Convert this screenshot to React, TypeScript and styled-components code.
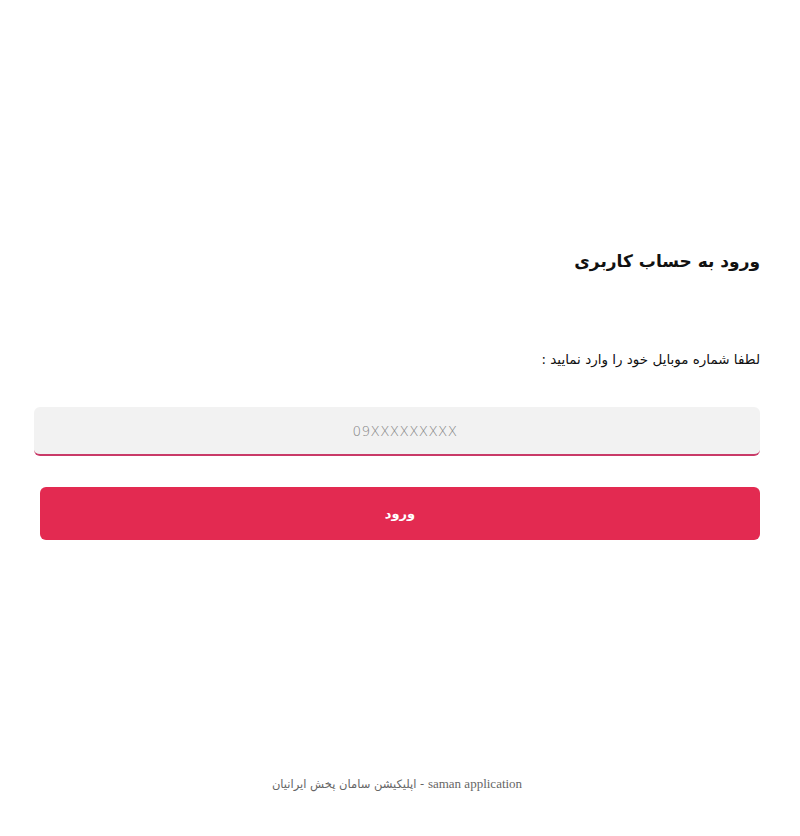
import React from 'react';
import styled, { createGlobalStyle } from 'styled-components';

const GlobalStyle = createGlobalStyle`
  html, body {
    margin: 0;
    padding: 0;
    background: #ffffff;
  }
  body {
    font-family: "DejaVu Sans", "Noto Sans", sans-serif;
    direction: rtl;
  }
`;

const StyledPage = styled.div`
  /* Display */
  min-height: 836px;
  display: flex;
  flex-direction: column;
  box-sizing: border-box;
  padding: 0 40px 0 34px;
`;

const StyledMain = styled.main`
  /* Display */
  flex: 1;
  display: flex;
  flex-direction: column;
  padding-top: 246px;
`;

const StyledTitle = styled.h1`
  /* Text */
  margin: 0;
  font-size: 17px;
  font-weight: 700;
  color: #111111;
  line-height: 30px;
`;

const StyledLabel = styled.p`
  /* Text */
  margin: 71px 0 0;
  font-size: 13.5px;
  color: #111111;
  line-height: 24px;
`;

const StyledInput = styled.input`
  /* Display */
  margin-top: 36px;
  height: 49px;
  width: 100%;
  box-sizing: border-box;
  padding: 0 0 0 16px;
  border: none;
  border-bottom: 2px solid #c93a68;
  border-radius: 6px;
  background: #f2f2f2;
  outline: none;

  /* Text */
  font-family: "DejaVu Sans", sans-serif;
  font-size: 13.5px;
  font-weight: 200;
  letter-spacing: 0.4px;
  text-align: center;
  color: #333333;

  &::placeholder {
    color: #858585;
  }
`;

const StyledButton = styled.button`
  /* Display */
  margin: 31px 0 0 6px;
  height: 53px;
  border: none;
  border-radius: 6px;
  background: #e32a51;
  cursor: pointer;

  /* Text */
  font-family: "DejaVu Sans", sans-serif;
  font-size: 13px;
  font-weight: 700;
  color: #ffffff;
`;

const StyledFooter = styled.footer`
  /* Display */
  padding-bottom: 44px;
  text-align: center;

  /* Text */
  font-family: "DejaVu Sans", "Liberation Serif", serif;
  font-size: 11.5px;
  color: #666666;
`;

const StyledLatin = styled.span`
  font-family: "Liberation Serif", serif;
  font-size: 13px;
`;

function App() {
  return (
    <>
      <GlobalStyle />
      <StyledPage>
        <StyledMain>
          <StyledTitle>ورود به حساب کاربری</StyledTitle>
          <StyledLabel>لطفا شماره موبایل خود را وارد نمایید :</StyledLabel>
          <StyledInput type="tel" dir="ltr" placeholder="09XXXXXXXXX" />
          <StyledButton type="button">ورود</StyledButton>
        </StyledMain>
        <StyledFooter>
          <StyledLatin dir="ltr">saman application</StyledLatin> - اپلیکیشن سامان پخش ایرانیان
        </StyledFooter>
      </StyledPage>
    </>
  );
}

export default App;
